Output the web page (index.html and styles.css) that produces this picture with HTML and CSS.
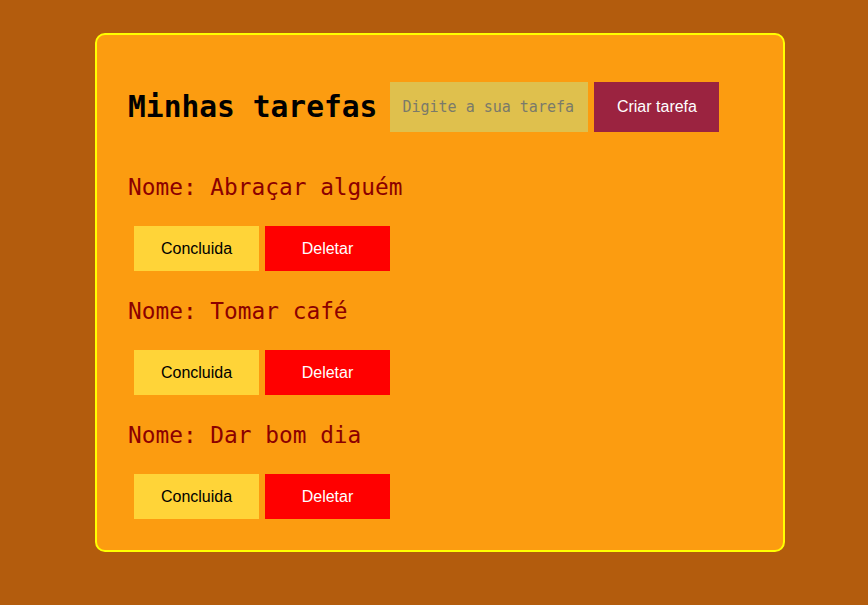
FILE: index.html
```html
<!DOCTYPE html>
<html lang="pt">
<head>
<meta charset="utf-8">
<link rel="stylesheet" href="styles.css">
</head>
<body>
<div class="card">
  <div class="header">
    <h1 class="title">Minhas tarefas</h1>
    <input class="task-input" type="text" placeholder="Digite a sua tarefa">
    <button class="btn btn-create">Criar tarefa</button>
  </div>
  <div class="task">
    <p class="task-name">Nome: Abraçar alguém</p>
    <div class="actions">
      <button class="btn btn-done">Concluida</button>
      <button class="btn btn-delete">Deletar</button>
    </div>
  </div>
  <div class="task">
    <p class="task-name">Nome: Tomar café</p>
    <div class="actions">
      <button class="btn btn-done">Concluida</button>
      <button class="btn btn-delete">Deletar</button>
    </div>
  </div>
  <div class="task">
    <p class="task-name">Nome: Dar bom dia</p>
    <div class="actions">
      <button class="btn btn-done">Concluida</button>
      <button class="btn btn-delete">Deletar</button>
    </div>
  </div>
</div>
</body>
</html>
```
FILE: styles.css
```css
html, body {
  margin: 0;
  padding: 0;
}
body {
  background: #b35c0d;
  min-height: 605px;
  padding-top: 33px;
  box-sizing: border-box;
}
.card {
  width: 690px;
  box-sizing: border-box;
  margin: 0 0 0 95px;
  background: #fc9c10;
  border: 2px solid #ffff00;
  border-radius: 10px;
  padding: 47px 31px 31px 31px;
  font-family: "DejaVu Sans Mono", monospace;
}
.header {
  display: flex;
  align-items: center;
  gap: 6px;
  margin-bottom: 42px;
}
.title {
  margin: 0 7px 0 0;
  font-size: 29.6px;
  font-weight: bold;
  color: #000;
}
.task-input {
  width: 198px;
  height: 50px;
  box-sizing: border-box;
  border: none;
  background: #dfc04d;
  padding: 0 12px;
  font-family: "DejaVu Sans Mono", monospace;
  font-size: 15px;
  outline: none;
}
.task-input::placeholder {
  color: #7a7a6a;
}
.btn {
  width: 125px;
  border: none;
  font-family: "Liberation Sans", Arial, sans-serif;
  font-size: 16px;
  cursor: pointer;
}
.btn-create {
  height: 50px;
  background: #9b2340;
  color: #fff;
}
.task-name {
  margin: 0;
  font-size: 22.8px;
  color: #8b0000;
  line-height: 26px;
}
.actions {
  display: flex;
  gap: 6px;
  margin: 26px 0 27px 6px;
}
.task:last-child .actions {
  margin-bottom: 0;
}
.btn-done {
  height: 45px;
  background: #ffd438;
  color: #000;
}
.btn-delete {
  height: 45px;
  background: #ff0000;
  color: #fff;
}
```
